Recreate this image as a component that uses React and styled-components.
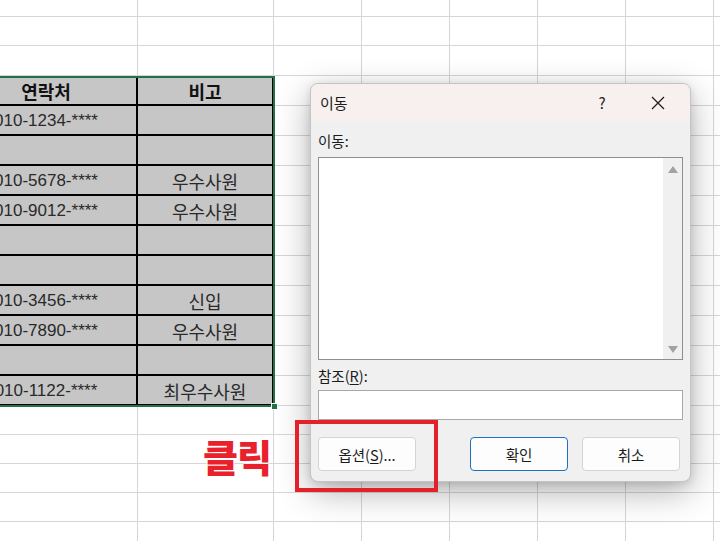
import React from "react";
import styled, { createGlobalStyle } from "styled-components";

const GlobalStyle = createGlobalStyle`
  html, body {
    margin: 0;
    padding: 0;
    background: #ffffff;
  }
  * {
    box-sizing: border-box;
  }
`;

const COL_WIDTHS = [182, 136, 88, 88, 88, 88, 88, 88];
const ROW_HEIGHTS = [30, 29, 30, ...Array(11).fill(30), 29, 29, 29, 29, 29];
const TABLE_FIRST_ROW = 3;
const TABLE_LAST_ROW = 13;

const rows = [
  ["010-1234-****", ""],
  ["", ""],
  ["010-5678-****", "우수사원"],
  ["010-9012-****", "우수사원"],
  ["", ""],
  ["", ""],
  ["010-3456-****", "신입"],
  ["010-7890-****", "우수사원"],
  ["", ""],
  ["010-1122-****", "최우수사원"],
];

const Screen = styled.div`
  position: relative;
  width: 720px;
  height: 541px;
  overflow: hidden;
  background: #ffffff;
  font-family: "Noto Sans CJK KR", "Liberation Sans", sans-serif;
`;

const Sheet = styled.div`
  display: grid;
  grid-template-columns: ${COL_WIDTHS.map((w) => `${w}px`).join(" ")};
  grid-template-rows: ${ROW_HEIGHTS.map((h) => `${h}px`).join(" ")};
  margin: -13px 0 0 -44px;
  width: max-content;
`;

const Cell = styled.div`
  grid-row: ${(p) => p.$r + 1};
  grid-column: ${(p) => p.$c + 1};
  display: flex;
  align-items: center;
  justify-content: center;
  border-right: 1px solid #d6d6d6;
  border-bottom: 1px solid #d6d6d6;
  font-family: "Liberation Sans", "Noto Sans CJK KR", sans-serif;
  font-size: 17px;
  color: #222222;
  white-space: nowrap;
`;

const TableCell = styled(Cell)`
  background: #c6c6c6;
  border-right: 2px solid #000000;
  border-bottom: 2px solid #000000;
  padding-top: 1px;
  font-size: ${(p) => (p.$korean ? 18 : 17)}px;
  font-weight: ${(p) => (p.$head ? 700 : 400)};
  color: ${(p) => (p.$head ? "#111111" : "#2a2a2a")};
`;

const Selection = styled.div`
  position: relative;
  grid-column: 1 / 3;
  grid-row: ${TABLE_FIRST_ROW + 1} / ${TABLE_LAST_ROW + 2};
  border: 2px solid #217346;
  margin: 0 -1px -1px 0;
  pointer-events: none;
`;

const Handle = styled.span`
  position: absolute;
  right: -5px;
  bottom: -5px;
  width: 7px;
  height: 7px;
  background: #217346;
  border: 1px solid #ffffff;
`;

const Dialog = styled.div`
  position: absolute;
  left: 310px;
  top: 83px;
  width: 381px;
  height: 399px;
  display: flex;
  flex-direction: column;
  background: #f0f0f0;
  border: 1px solid #c4c4c4;
  border-radius: 8px;
  overflow: hidden;
  box-shadow: 0 10px 34px rgba(0, 0, 0, 0.3), 0 2px 8px rgba(0, 0, 0, 0.12);
  font-family: "Noto Sans CJK KR", "Liberation Sans", sans-serif;
  color: #1b1b1b;
`;

const TitleBar = styled.div`
  display: flex;
  align-items: center;
  height: 37px;
  flex-shrink: 0;
  background: #f7f0ee;
  padding-left: 9px;
`;

const Title = styled.span`
  flex: 1;
  font-size: 15px;
`;

const TitleButton = styled.div`
  display: flex;
  align-items: center;
  justify-content: center;
  width: ${(p) => p.$w}px;
  height: 37px;
  font-size: 15px;
  color: #222222;
`;

const Body = styled.div`
  display: flex;
  flex-direction: column;
  padding: 10px 7px 11px 7px;
  flex: 1;
`;

const Label = styled.div`
  font-size: 14.5px;
  line-height: 20px;
  height: 21px;
  margin-bottom: ${(p) => p.$mb || 0}px;
`;

const ListBox = styled.div`
  display: flex;
  height: 203px;
  background: #ffffff;
  border: 1px solid #8e8e8e;
  margin-bottom: 6px;
`;

const ListArea = styled.div`
  flex: 1;
`;

const ScrollBar = styled.div`
  display: flex;
  flex-direction: column;
  justify-content: space-between;
  align-items: center;
  width: 19px;
  background: #f0f0f0;
  padding: 8px 0 6px;
`;

const Input = styled.div`
  height: 30px;
  background: #ffffff;
  border: 1px solid #a8a8a8;
  margin-top: 3px;
`;

const ButtonRow = styled.div`
  display: flex;
  align-items: center;
  margin-top: 17px;
  padding-right: 2px;
`;

const Button = styled.div`
  display: flex;
  align-items: center;
  justify-content: center;
  width: 98px;
  height: 34px;
  background: #fdfdfd;
  border: 1px solid ${(p) => (p.$primary ? "#1f6fc2" : "#d4d4d4")};
  border-radius: 4px;
  font-size: 14.5px;
  color: #1b1b1b;
  margin-left: ${(p) => p.$ml || 0}px;
`;

const U = styled.span`
  text-decoration: underline;
  text-underline-offset: 2px;
`;

const Callout = styled.div`
  position: absolute;
  left: 295px;
  top: 420px;
  width: 143px;
  height: 72px;
  border: 4px solid #e4212b;
`;

const ClickText = styled.div`
  position: absolute;
  left: 203px;
  top: 430px;
  font-family: "Noto Sans CJK KR", sans-serif;
  font-weight: 900;
  font-size: 38px;
  line-height: 52px;
  letter-spacing: -1px;
  color: #e8212c;
  text-shadow: 0 0 2px #ffffff, 0 0 3px #ffffff;
`;

function Triangle({ down }) {
  return (
    <svg width="10" height="7" viewBox="0 0 10 7">
      <path d={down ? "M0 0 L10 0 L5 7 Z" : "M0 7 L10 7 L5 0 Z"} fill="#a2a2a2" />
    </svg>
  );
}

function CloseIcon() {
  return (
    <svg width="14" height="14" viewBox="0 0 14 14">
      <path d="M1 1 L13 13 M13 1 L1 13" stroke="#1f1f1f" strokeWidth="1.3" fill="none" />
    </svg>
  );
}

function renderSheet() {
  const cells = [];
  ROW_HEIGHTS.forEach((_, r) => {
    COL_WIDTHS.forEach((__, c) => {
      const key = `${r}-${c}`;
      if (r >= TABLE_FIRST_ROW && r <= TABLE_LAST_ROW && c < 2) {
        if (r === TABLE_FIRST_ROW) {
          cells.push(
            <TableCell key={key} $r={r} $c={c} $head $korean>
              {c === 0 ? "연락처" : "비고"}
            </TableCell>
          );
        } else {
          cells.push(
            <TableCell key={key} $r={r} $c={c} $korean={c === 1}>
              {rows[r - TABLE_FIRST_ROW - 1][c]}
            </TableCell>
          );
        }
      } else {
        cells.push(<Cell key={key} $r={r} $c={c} />);
      }
    });
  });
  return cells;
}

export default function App() {
  return (
    <>
      <GlobalStyle />
      <Screen>
        <Sheet>
          {renderSheet()}
          <Selection>
            <Handle />
          </Selection>
        </Sheet>

        <ClickText>클릭</ClickText>

        <Dialog>
          <TitleBar>
            <Title>이동</Title>
            <TitleButton $w={46}>?</TitleButton>
            <TitleButton $w={65}>
              <CloseIcon />
            </TitleButton>
          </TitleBar>
          <Body>
            <Label $mb={5}>이동:</Label>
            <ListBox>
              <ListArea />
              <ScrollBar>
                <Triangle />
                <Triangle down />
              </ScrollBar>
            </ListBox>
            <Label>
              참조(<U>R</U>):
            </Label>
            <Input />
            <ButtonRow>
              <Button>
                옵션(<U>S</U>)...
              </Button>
              <Button $primary $ml={54}>
                확인
              </Button>
              <Button $ml={14}>취소</Button>
            </ButtonRow>
          </Body>
        </Dialog>

        <Callout />
      </Screen>
    </>
  );
}
